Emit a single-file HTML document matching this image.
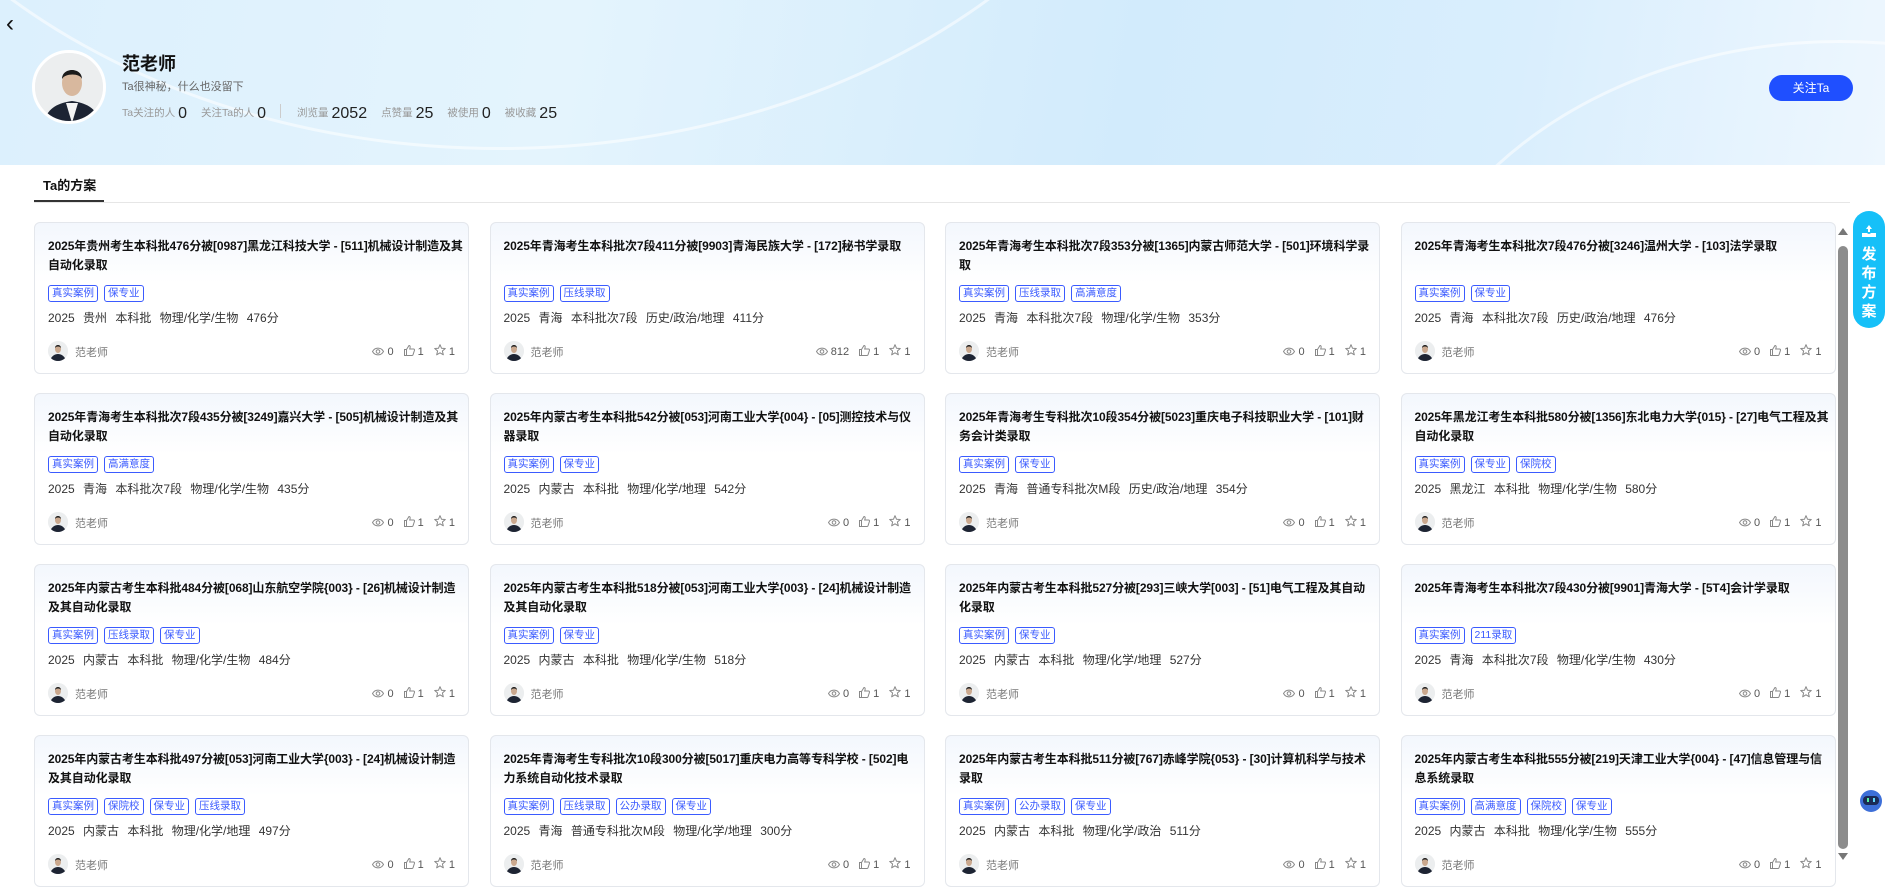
<!DOCTYPE html>
<html><head><meta charset="utf-8">
<style>
*{margin:0;padding:0;box-sizing:border-box}
body{width:1885px;height:874px;overflow:hidden;background:#fff;font-family:"Liberation Sans","Noto Sans CJK SC",sans-serif;position:relative;color:#222}
.hdr{position:absolute;left:0;top:0;width:1885px;height:165px;background:linear-gradient(100deg,#dcf0fd 0%,#e4f4fd 30%,#d2ebfc 60%,#d9eefd 80%,#eef7fe 100%);overflow:hidden}
.arc{position:absolute;border-radius:50%;border:3px solid rgba(255,255,255,.55)}
.back{position:absolute;left:6px;top:10px;font-size:24px;color:#111}
.av{position:absolute;left:32px;top:50px;width:74px;height:74px;border-radius:50%;border:3px solid #fff;overflow:hidden;background:#eef0f2}
.name{position:absolute;left:122px;top:50px;font-size:18px;font-weight:bold;color:#111}
.sub{position:absolute;left:122px;top:78px;font-size:11px;color:#666}
.stats{position:absolute;left:122px;top:104px;white-space:nowrap;font-size:10.5px;color:#999}
.stats span.n{font-size:16px;color:#222;margin-left:3px;margin-right:14px;vertical-align:-2px}
.sep{display:inline-block;width:1px;height:14px;background:#ccc;margin-right:16px;vertical-align:-2px}
.btn{position:absolute;left:1769px;top:75px;width:84px;height:26px;border-radius:13px;background:#1f4fff;color:#fff;font-size:12px;text-align:center;line-height:26px}
.tab{position:absolute;left:43px;top:175px;font-size:13px;font-weight:bold;color:#111}
.tabline{position:absolute;left:34px;top:200px;width:70px;height:2px;background:#333}
.divider{position:absolute;left:34px;top:202px;width:1816px;height:1px;background:#e6e6e6}
.card{position:absolute;width:435px;height:152px;border:1px solid #e4e7ec;border-radius:6px;background:linear-gradient(180deg,#f3f7fd 0%,#fff 40%);padding:14px 5px 0 13px}
.t{font-size:12px;font-weight:bold;line-height:19px;height:38px;color:#111;overflow:hidden;letter-spacing:-0.1px}
.tags{margin-top:8px;height:17px;white-space:nowrap}
.tag{display:inline-block;height:17px;line-height:15px;border:1px solid #3b5bff;color:#3b5bff;border-radius:3px;font-size:10.5px;padding:0 3px;margin-right:6px}
.info{margin-top:9px;font-size:12px;color:#333;word-spacing:5px;white-space:nowrap}
.ft{position:absolute;left:13px;right:13px;bottom:12px;height:20px;font-size:11px;color:#777}
.ft .ua{position:absolute;left:0;top:0;width:20px;height:20px;border-radius:50%;overflow:hidden;background:#eef0f2}
.ft .un{position:absolute;left:27px;top:3px}
.ft .st{position:absolute;right:0;top:3px;white-space:nowrap;color:#555}
.ft .st i{font-style:normal;color:#999;margin-left:10px}
.sb{position:absolute;left:1838px;top:246px;width:10px;height:603px;background:#8c8c8c;border-radius:5px}
.fab{position:absolute;left:1853px;top:211px;width:32px;height:117px;background:#16c0f8;border-radius:16px;color:#fff;font-weight:bold;font-size:15px;text-align:center;line-height:19px;padding-top:34px}
</style></head><body>
<div class="hdr">
 <div class="arc" style="left:-200px;top:-900px;width:1400px;height:1050px"></div>
 <div class="arc" style="left:1390px;top:40px;width:900px;height:700px"></div>
 <div class="back">&#x2039;</div>
 <div class="av"><svg width="74" height="74" viewBox="0 0 74 74"><rect width="74" height="74" fill="#eceeef"/><path d="M8 74 C10 56 22 50 37 48 C52 50 64 56 66 74Z" fill="#1d2433"/><path d="M31 50 L37 70 L43 50Z" fill="#f4f4f4"/><ellipse cx="37" cy="30" rx="10" ry="13" fill="#d8b89e"/><path d="M27 26 C27 14 47 14 47 26 C45 20 30 20 27 26Z" fill="#1b1b1b"/></svg></div>
 <div class="name">范老师</div>
 <div class="sub">Ta很神秘，什么也没留下</div>
 <div class="stats">Ta关注的人<span class="n">0</span>关注Ta的人<span class="n">0</span><span class="sep"></span>浏览量<span class="n">2052</span>点赞量<span class="n">25</span>被使用<span class="n">0</span>被收藏<span class="n">25</span></div>
 <div class="btn">关注Ta</div>
</div>
<div class="tab">Ta的方案</div>
<div class="divider"></div>
<div class="tabline"></div>
<div id="cards"></div>
<div style="position:absolute;left:1838px;top:228px;width:0;height:0;border-left:5px solid transparent;border-right:5px solid transparent;border-bottom:7px solid #777"></div>
<div class="sb"></div>
<div style="position:absolute;left:1838px;top:853px;width:0;height:0;border-left:5px solid transparent;border-right:5px solid transparent;border-top:7px solid #777"></div>
<div class="fab"><svg style="position:absolute;left:9px;top:14px" width="14" height="12" viewBox="0 0 14 12"><path d="M7 0 L10 4 H8 V7 H6 V4 H4Z" fill="#fff"/><path d="M0 8 H5 Q7 10 9 8 H14 V12 H0Z" fill="#fff"/></svg>发<br>布<br>方<br>案</div>
<svg style="position:absolute;left:1859px;top:789px" width="24" height="24" viewBox="0 0 24 24"><circle cx="12" cy="12" r="11" fill="#3d6fd8"/><rect x="4" y="7" width="16" height="9" rx="4" fill="#1b2a55"/><rect x="8" y="9" width="2" height="4" fill="#4ff0a0"/><rect x="14" y="9" width="2" height="4" fill="#5fd8ff"/></svg>
<script>
var D=[
["2025年贵州考生本科批476分被[0987]黑龙江科技大学 - [511]机械设计制造及其自动化录取",["真实案例","保专业"],"2025 贵州 本科批 物理/化学/生物 476分","0"],
["2025年青海考生本科批次7段411分被[9903]青海民族大学 - [172]秘书学录取",["真实案例","压线录取"],"2025 青海 本科批次7段 历史/政治/地理 411分","812"],
["2025年青海考生本科批次7段353分被[1365]内蒙古师范大学 - [501]环境科学录取",["真实案例","压线录取","高满意度"],"2025 青海 本科批次7段 物理/化学/生物 353分","0"],
["2025年青海考生本科批次7段476分被[3246]温州大学 - [103]法学录取",["真实案例","保专业"],"2025 青海 本科批次7段 历史/政治/地理 476分","0"],
["2025年青海考生本科批次7段435分被[3249]嘉兴大学 - [505]机械设计制造及其自动化录取",["真实案例","高满意度"],"2025 青海 本科批次7段 物理/化学/生物 435分","0"],
["2025年内蒙古考生本科批542分被[053]河南工业大学{004} - [05]测控技术与仪器录取",["真实案例","保专业"],"2025 内蒙古 本科批 物理/化学/地理 542分","0"],
["2025年青海考生专科批次10段354分被[5023]重庆电子科技职业大学 - [101]财务会计类录取",["真实案例","保专业"],"2025 青海 普通专科批次M段 历史/政治/地理 354分","0"],
["2025年黑龙江考生本科批580分被[1356]东北电力大学{015} - [27]电气工程及其自动化录取",["真实案例","保专业","保院校"],"2025 黑龙江 本科批 物理/化学/生物 580分","0"],
["2025年内蒙古考生本科批484分被[068]山东航空学院{003} - [26]机械设计制造及其自动化录取",["真实案例","压线录取","保专业"],"2025 内蒙古 本科批 物理/化学/生物 484分","0"],
["2025年内蒙古考生本科批518分被[053]河南工业大学{003} - [24]机械设计制造及其自动化录取",["真实案例","保专业"],"2025 内蒙古 本科批 物理/化学/生物 518分","0"],
["2025年内蒙古考生本科批527分被[293]三峡大学[003] - [51]电气工程及其自动化录取",["真实案例","保专业"],"2025 内蒙古 本科批 物理/化学/地理 527分","0"],
["2025年青海考生本科批次7段430分被[9901]青海大学 - [5T4]会计学录取",["真实案例","211录取"],"2025 青海 本科批次7段 物理/化学/生物 430分","0"],
["2025年内蒙古考生本科批497分被[053]河南工业大学{003} - [24]机械设计制造及其自动化录取",["真实案例","保院校","保专业","压线录取"],"2025 内蒙古 本科批 物理/化学/地理 497分","0"],
["2025年青海考生专科批次10段300分被[5017]重庆电力高等专科学校 - [502]电力系统自动化技术录取",["真实案例","压线录取","公办录取","保专业"],"2025 青海 普通专科批次M段 物理/化学/地理 300分","0"],
["2025年内蒙古考生本科批511分被[767]赤峰学院{053} - [30]计算机科学与技术录取",["真实案例","公办录取","保专业"],"2025 内蒙古 本科批 物理/化学/政治 511分","0"],
["2025年内蒙古考生本科批555分被[219]天津工业大学{004} - [47]信息管理与信息系统录取",["真实案例","高满意度","保院校","保专业"],"2025 内蒙古 本科批 物理/化学/生物 555分","0"]];
var ua='<svg width="20" height="20" viewBox="0 0 20 20"><rect width="20" height="20" fill="#eceeef"/><path d="M2 20 C3 15 7 13 10 13 C13 13 17 15 18 20Z" fill="#1d2433"/><ellipse cx="10" cy="8" rx="3" ry="4" fill="#caa88e"/><path d="M7 7 C7 3 13 3 13 7 C12 5 8 5 7 7Z" fill="#222"/></svg>';
var eye='<svg width="12" height="9" viewBox="0 0 12 9" style="vertical-align:-1px"><path d="M0.5 4.5 C3 0 9 0 11.5 4.5 C9 9 3 9 0.5 4.5Z" fill="none" stroke="#888"/><circle cx="6" cy="4.5" r="1.8" fill="none" stroke="#888"/></svg>';
var th='<svg width="11" height="11" viewBox="0 0 11 11" style="vertical-align:-1px"><path d="M0.5 4.5 H2.5 V10.5 H0.5Z M2.5 4.5 L5 0.5 C6.2 0.5 6.3 1.5 6 3 L5.7 4 H9.5 C10.3 4 10.7 4.7 10.4 5.5 L9 9.8 C8.8 10.3 8.4 10.5 8 10.5 H2.5" fill="none" stroke="#888"/></svg>';
var st='<svg width="12" height="12" viewBox="0 0 12 12" style="vertical-align:-1px"><path d="M6 0.7 L7.5 4.2 L11.3 4.5 L8.4 7 L9.3 10.8 L6 8.8 L2.7 10.8 L3.6 7 L0.7 4.5 L4.5 4.2Z" fill="none" stroke="#888" stroke-linejoin="round"/></svg>';
var h='';
D.forEach(function(d,i){var x=34+(i%4)*455.5,y=222+Math.floor(i/4)*171;
h+='<div class="card" style="left:'+x+'px;top:'+y+'px"><div class="t">'+d[0]+'</div><div class="tags">'+d[1].map(function(t){return '<span class="tag">'+t+'</span>'}).join('')+'</div><div class="info">'+d[2]+'</div><div class="ft"><div class="ua">'+ua+'</div><div class="un">范老师</div><div class="st">'+eye+' '+d[3]+'<i></i>'+th+' 1<i></i>'+st+' 1</div></div></div>';});
document.getElementById('cards').innerHTML=h;
</script>
</body></html>
